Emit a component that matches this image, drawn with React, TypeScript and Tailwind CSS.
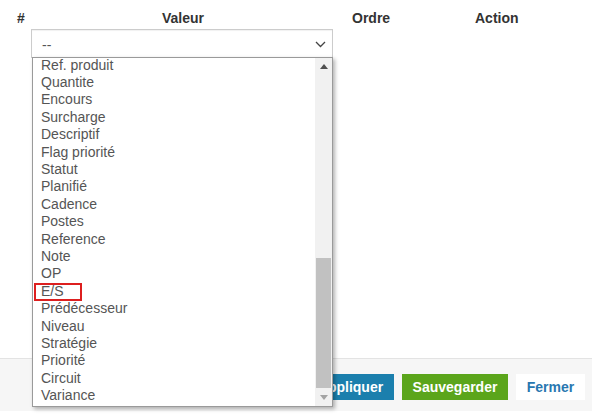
import React from 'react';

const OPTIONS = [
  'Ref. produit',
  'Quantite',
  'Encours',
  'Surcharge',
  'Descriptif',
  'Flag priorité',
  'Statut',
  'Planifié',
  'Cadence',
  'Postes',
  'Reference',
  'Note',
  'OP',
  'E/S',
  'Prédécesseur',
  'Niveau',
  'Stratégie',
  'Priorité',
  'Circuit',
  'Variance',
];

function Chevron() {
  return (
    <svg width="11" height="7" viewBox="0 0 11 7" fill="none">
      <polyline points="1,1 5.5,5.5 10,1" stroke="#444" strokeWidth="1.3" />
    </svg>
  );
}

function ScrollBar() {
  return (
    <div className="w-[17px] flex flex-col bg-[#f1f1f1]">
      <div className="h-[17px] flex items-center justify-center">
        <svg width="8" height="5" viewBox="0 0 8 5">
          <polygon points="0,5 4,0 8,5" fill="#505050" />
        </svg>
      </div>
      <div className="h-[183px]" />
      <div className="h-[130px] mx-px bg-[#c1c1c1]" />
      <div className="flex-1 flex items-center justify-center">
        <svg width="8" height="5" viewBox="0 0 8 5">
          <polygon points="0,0 8,0 4,5" fill="#a3a3a3" />
        </svg>
      </div>
    </div>
  );
}

export default function App() {
  return (
    <div
      className="w-[592px] h-[416px] flex flex-col bg-white text-[#333] overflow-hidden"
      style={{ fontFamily: '"Liberation Sans", Arial, sans-serif' }}
    >
      {/* Table header */}
      <div className="flex pt-[8px] h-[28px] leading-[20px] text-[14px] font-bold text-[#333]">
        <div className="w-[31px] pl-[17px]">#</div>
        <div className="w-[304px] text-center">Valeur</div>
        <div className="w-[140px] pl-[17px]">Ordre</div>
        <div className="pl-0">Action</div>
      </div>

      {/* Select + open list */}
      <div className="relative mt-[1px] ml-[31px] w-[302px]">
        <div className="h-[29px] border border-[#ccc] bg-white flex items-center justify-between pl-[10px] pr-[6px] pt-[3px] text-[14px] text-[#555] shadow-[inset_0_1px_1px_rgba(0,0,0,0.06)]">
          <span>--</span>
          <span className="-mt-[2px]">
            <Chevron />
          </span>
        </div>

        <div className="absolute z-10 left-px top-[28px] w-[301px] h-[350px] border border-[#9a9a9a] bg-white flex shadow-[2px_2px_4px_rgba(0,0,0,0.3)]">
          <div className="flex-1 overflow-hidden">
            <div className="-mt-[1.5px]">
              {OPTIONS.map((o) => (
                <div key={o} className="relative h-[17.42px] leading-[17.42px] pl-[8px] text-[14px] text-[#555] whitespace-nowrap">
                  {o}
                  {o === 'E/S' && (
                    <span className="absolute left-[1px] top-0 w-[48px] h-[18px] border-2 border-[#dd1f1f]" />
                  )}
                </div>
              ))}
            </div>
          </div>
          <ScrollBar />
        </div>
      </div>

      {/* Footer */}
      <div className="mt-auto mb-[5px] h-[53px] border-t border-[#e3e3e3] bg-[#f6f6f6] flex justify-end items-start gap-[8px] pt-[15px] pr-[7px]">
        <button className="w-[87px] h-[26px] bg-[#1b7fad] text-white text-[14px] font-bold">
          Appliquer
        </button>
        <button className="w-[106px] h-[26px] bg-[#5ba51b] text-white text-[14px] font-bold">
          Sauvegarder
        </button>
        <button className="w-[69px] h-[26px] bg-white text-[#2877b0] text-[14px] font-bold">
          Fermer
        </button>
      </div>
    </div>
  );
}
